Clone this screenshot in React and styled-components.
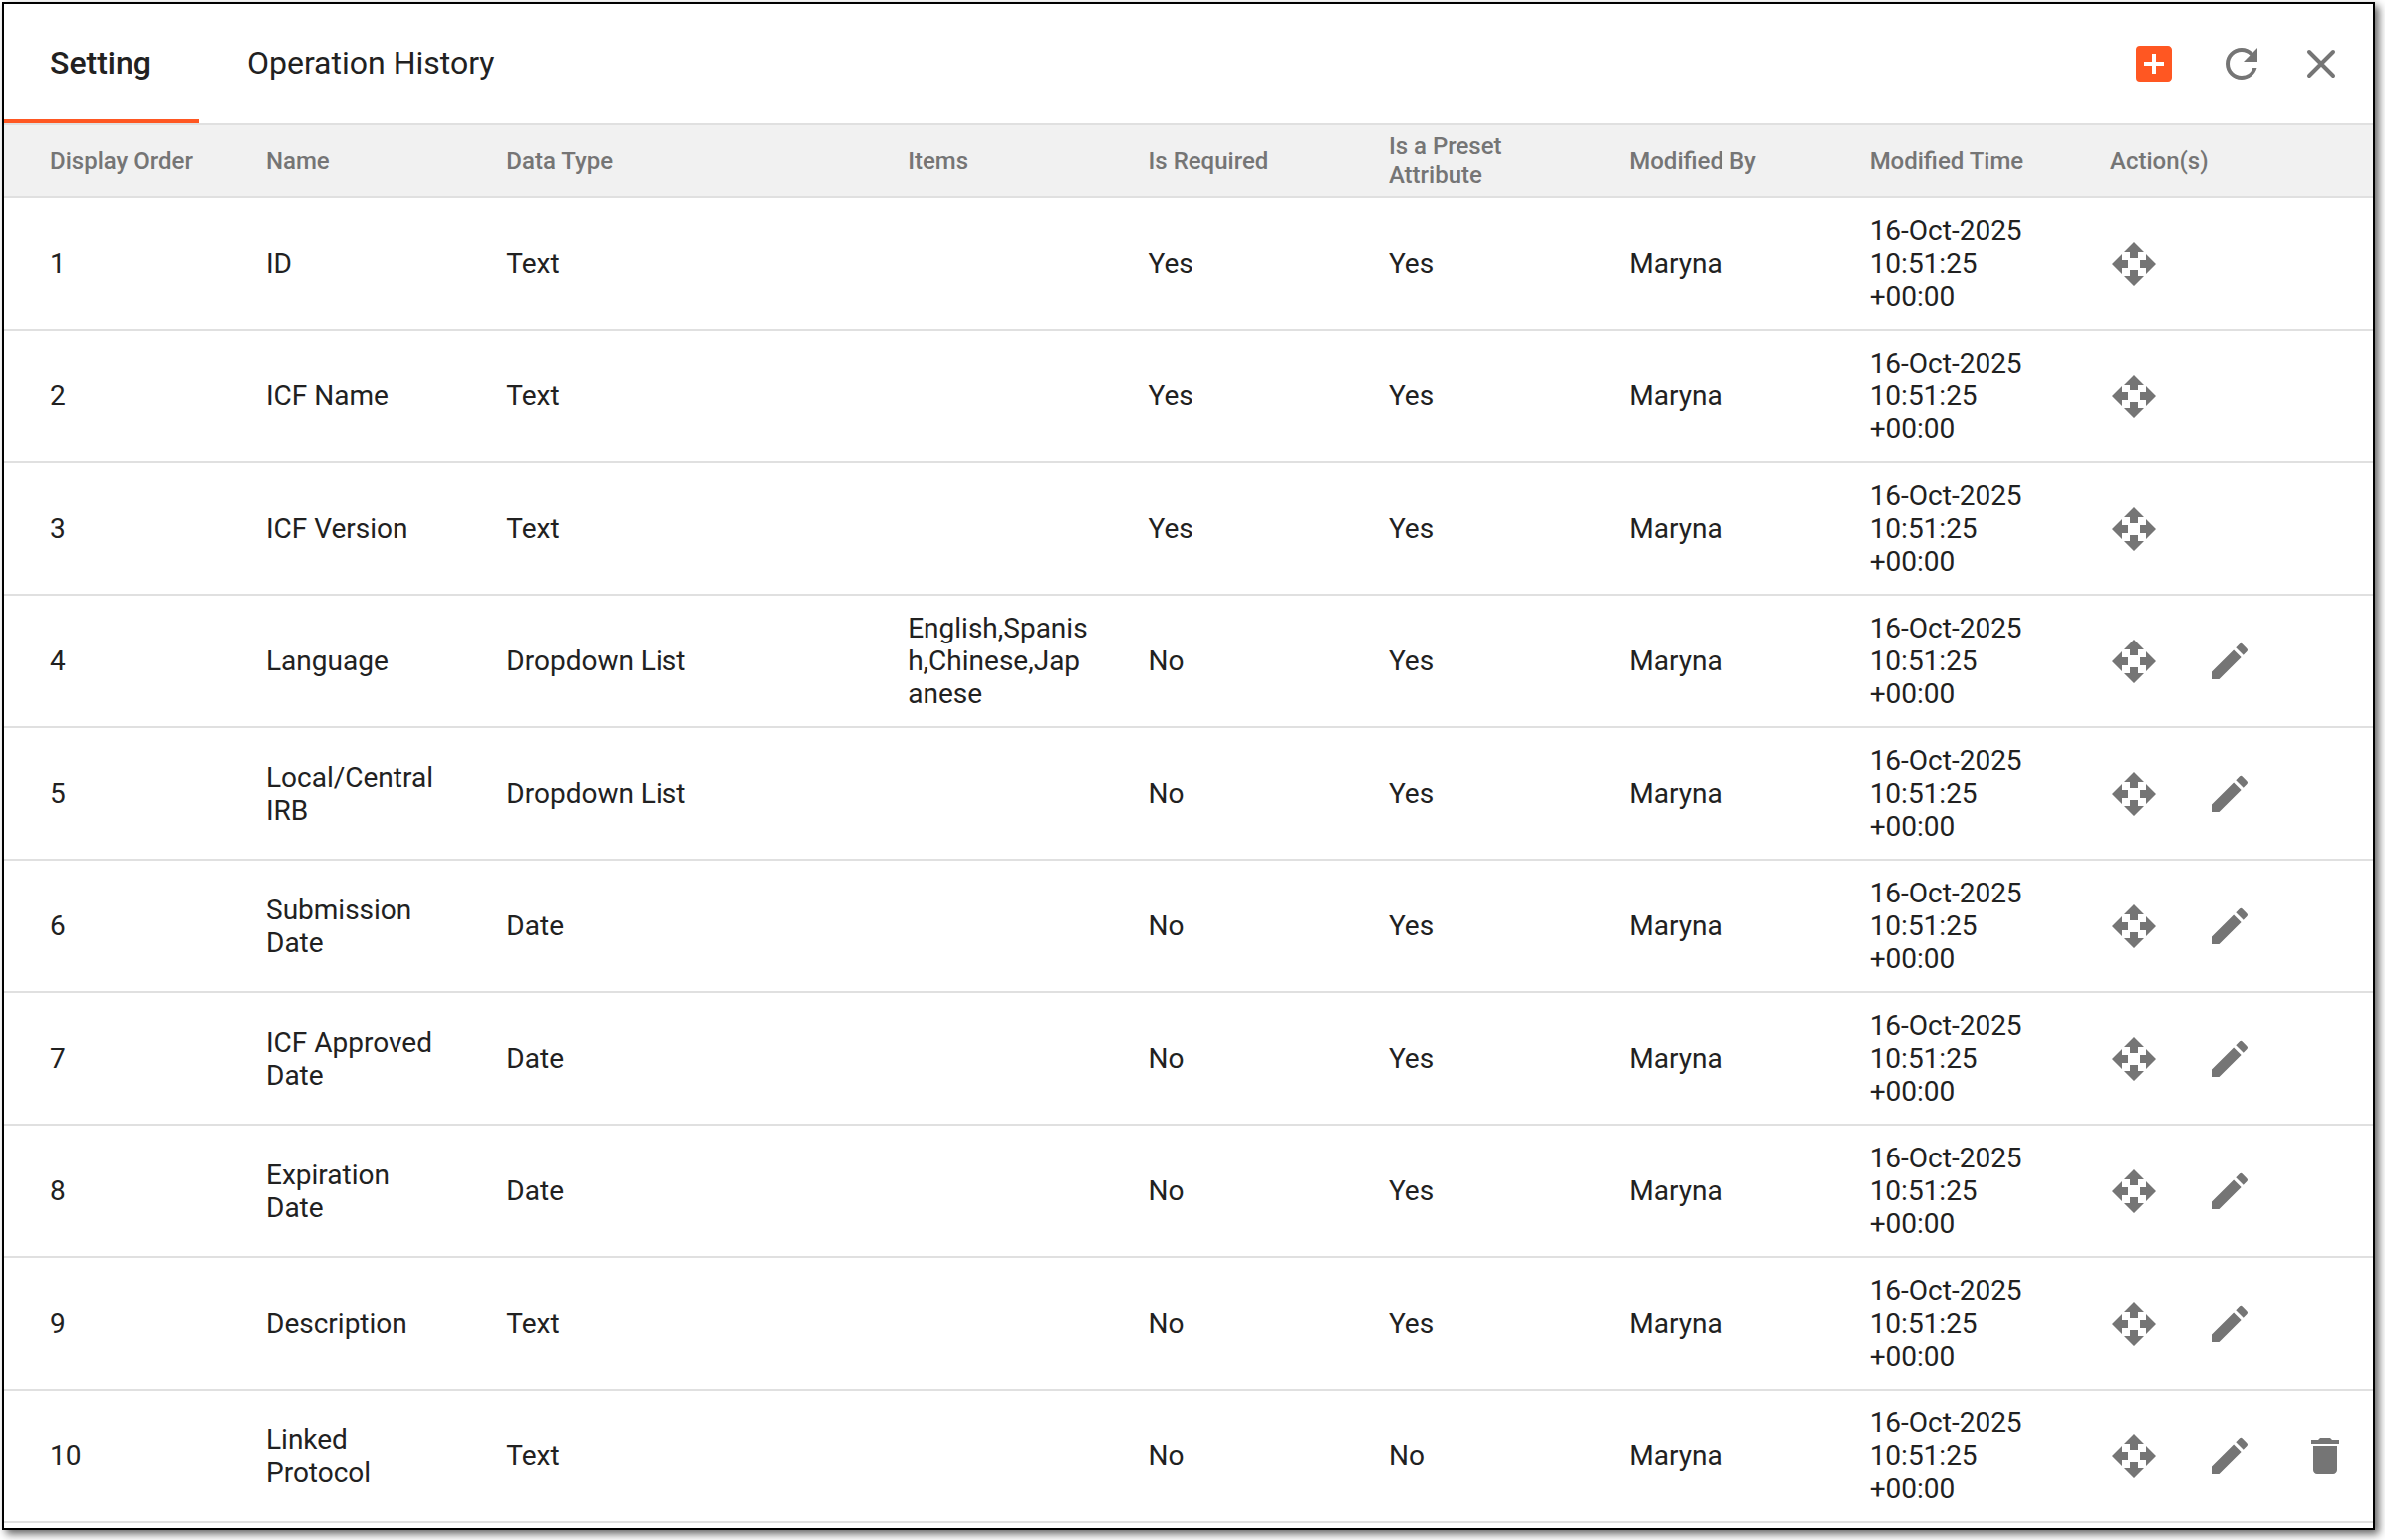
import React from "react";
import styled, { createGlobalStyle } from "styled-components";
import { MdAddBox, MdRefresh, MdOpenWith, MdEdit, MdDelete } from "react-icons/md";

const GlobalStyle = createGlobalStyle`
  * {
    box-sizing: border-box;
  }
  body {
    margin: 0;
    background: #fff;
    color: #212121;
    font-family: Roboto, "Liberation Sans", sans-serif;
    font-size: 28px;
    line-height: 33px;
  }
`;

const Page = styled.main`
  padding: 2px 10px 10px 2px;
`;

const Panel = styled.section`
  padding-bottom: 5px;
  border: 2px solid #000;
  background: #fff;
  box-shadow: 4px 4px 8px rgba(0, 0, 0, 0.6);
`;

const TopBar = styled.header`
  display: flex;
  justify-content: space-between;
  border-bottom: 2px solid #e0e0e0;
`;

const TabList = styled.div`
  display: flex;
`;

const Tab = styled.button`
  height: 119px;
  padding: 0 48px;
  border: none;
  border-top: 2px solid transparent;
  border-bottom: 4px solid ${(props) => (props.$active ? "#ff5722" : "transparent")};
  background: none;
  color: inherit;
  font-family: inherit;
  font-size: 32px;
  font-weight: ${(props) => (props.$active ? 500 : 400)};
  cursor: pointer;

  &:first-child {
    padding-left: 46px;
  }
`;

const Tools = styled.div`
  display: flex;
  align-items: center;
  gap: 40px;
  padding-right: 36px;
`;

const IconButton = styled.button`
  display: flex;
  padding: 0;
  border: none;
  background: none;
  color: ${(props) => (props.$primary ? "#ff5722" : "#757575")};
  font-size: 48px;
  cursor: pointer;
`;

const Table = styled.table`
  width: 100%;
  table-layout: fixed;
  border-collapse: separate;
  border-spacing: 0;
`;

const Col = styled.col`
  width: ${(props) => props.$width};
`;

const HeadCell = styled.th`
  height: 74px;
  padding: 8px 56px 6px 0;
  border-bottom: 2px solid #e0e0e0;
  background: #f1f1f1;
  color: #757575;
  font-size: 24px;
  font-weight: 500;
  line-height: 29px;
  text-align: left;

  &:first-child {
    padding-left: 46px;
    padding-right: 0;
  }
`;

const Cell = styled.td`
  height: 133px;
  padding: 16px 56px 16px 0;
  border-bottom: 2px solid #e0e0e0;
  overflow-wrap: anywhere;

  &:first-child {
    padding-left: 46px;
  }

  &:last-child {
    padding-right: 0;
  }
`;

const Actions = styled.div`
  display: flex;
  gap: 48px;
`;

const columns = [
  { title: "Display Order", width: "11.06%" },
  { title: "Name", width: "10.15%" },
  { title: "Data Type", width: "16.94%" },
  { title: "Items", width: "10.15%" },
  { title: "Is Required", width: "10.15%" },
  { title: "Is a Preset Attribute", width: "10.15%" },
  { title: "Modified By", width: "10.15%" },
  { title: "Modified Time", width: "10.15%" },
  { title: "Action(s)", width: "11.1%" },
];

const attributes = [
  { name: "ID", type: "Text", required: "Yes", preset: "Yes" },
  { name: "ICF Name", type: "Text", required: "Yes", preset: "Yes" },
  { name: "ICF Version", type: "Text", required: "Yes", preset: "Yes" },
  { name: "Language", type: "Dropdown List", items: "English,Spanish,Chinese,Japanese", required: "No", preset: "Yes", canEdit: true },
  { name: "Local/Central IRB", type: "Dropdown List", required: "No", preset: "Yes", canEdit: true },
  { name: "Submission Date", type: "Date", required: "No", preset: "Yes", canEdit: true },
  { name: "ICF Approved Date", type: "Date", required: "No", preset: "Yes", canEdit: true },
  { name: "Expiration Date", type: "Date", required: "No", preset: "Yes", canEdit: true },
  { name: "Description", type: "Text", required: "No", preset: "Yes", canEdit: true },
  { name: "Linked Protocol", type: "Text", required: "No", preset: "No", canEdit: true, canDelete: true },
];

function CloseIcon() {
  return (
    <svg width="32" height="32" viewBox="0 0 32 32" fill="none" stroke="currentColor" strokeWidth="4" strokeLinecap="round">
      <path d="M4 4l24 24M28 4L4 28" />
    </svg>
  );
}

function AttributeRow({ order, item }) {
  return (
    <tr>
      <Cell>{order}</Cell>
      <Cell>{item.name}</Cell>
      <Cell>{item.type}</Cell>
      <Cell>{item.items}</Cell>
      <Cell>{item.required}</Cell>
      <Cell>{item.preset}</Cell>
      <Cell>Maryna</Cell>
      <Cell>16-Oct-2025 10:51:25 +00:00</Cell>
      <Cell>
        <Actions>
          <IconButton type="button" aria-label={`Move ${item.name}`}><MdOpenWith /></IconButton>
          {item.canEdit && <IconButton type="button" aria-label={`Edit ${item.name}`}><MdEdit /></IconButton>}
          {item.canDelete && <IconButton type="button" aria-label={`Delete ${item.name}`}><MdDelete /></IconButton>}
        </Actions>
      </Cell>
    </tr>
  );
}

function App() {
  const [tab, setTab] = React.useState("Setting");

  return (
    <Page>
      <GlobalStyle />
      <Panel>
        <TopBar>
          <TabList role="tablist">
            {["Setting", "Operation History"].map((name) => (
              <Tab key={name} type="button" role="tab" aria-selected={tab === name} $active={tab === name} onClick={() => setTab(name)}>
                {name}
              </Tab>
            ))}
          </TabList>
          <Tools>
            <IconButton type="button" aria-label="Add" $primary><MdAddBox /></IconButton>
            <IconButton type="button" aria-label="Refresh"><MdRefresh /></IconButton>
            <IconButton type="button" aria-label="Close"><CloseIcon /></IconButton>
          </Tools>
        </TopBar>
        <Table>
          <colgroup>
            {columns.map((column) => <Col key={column.title} $width={column.width} />)}
          </colgroup>
          <thead>
            <tr>
              {columns.map((column) => <HeadCell key={column.title} scope="col">{column.title}</HeadCell>)}
            </tr>
          </thead>
          <tbody>
            {attributes.map((item, index) => <AttributeRow key={item.name} order={index + 1} item={item} />)}
          </tbody>
        </Table>
      </Panel>
    </Page>
  );
}

export default App;
